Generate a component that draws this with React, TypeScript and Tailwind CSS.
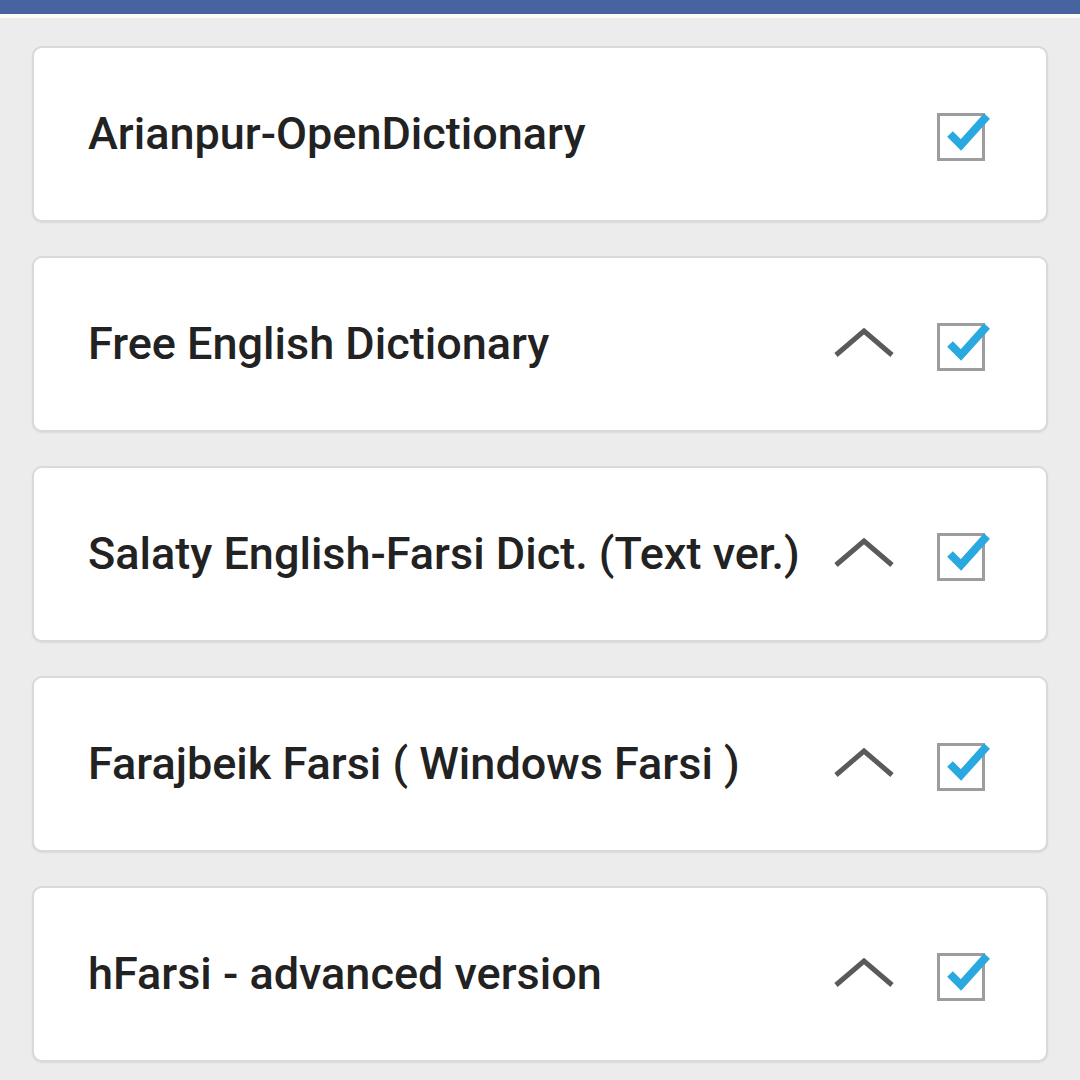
import React from 'react';

interface Dict {
  name: string;
  expandable: boolean;
}

const dicts: Dict[] = [
  { name: 'Arianpur-OpenDictionary', expandable: false },
  { name: 'Free English Dictionary', expandable: true },
  { name: 'Salaty English-Farsi Dict. (Text ver.)', expandable: true },
  { name: 'Farajbeik Farsi ( Windows Farsi )', expandable: true },
  { name: 'hFarsi - advanced version', expandable: true },
];

const Chevron = () => (
  <svg width="60" height="32" viewBox="0 0 60 32" className="shrink-0">
    <path d="M2 27 L30 3 L58 27" fill="none" stroke="#5a5a5a" strokeWidth="5" strokeLinejoin="miter" />
  </svg>
);

const CheckBox = () => (
  <svg width="60" height="60" viewBox="0 0 60 60" className="shrink-0">
    <rect x="6.5" y="10.5" width="45" height="45" fill="none" stroke="#9d9d9d" strokeWidth="3" />
    <path d="M18 30 L29 41 L55 12" fill="none" stroke="#2aa8e0" strokeWidth="8" strokeLinecap="butt" />
  </svg>
);

export default function App() {
  return (
    <div className="w-[1080px] h-[1080px] overflow-hidden bg-[#ececec] font-['Roboto',sans-serif]">
      <div className="h-[14px] bg-[#4764a0]" />
      <div className="h-[4px] bg-[#fbfbf4]" />
      <div className="flex flex-col gap-[34px] px-[32px] pt-[28px]">
        {dicts.map((d) => (
          <div
            key={d.name}
            className="h-[176px] flex items-center bg-white border-2 border-[#d9d9d9] rounded-[10px] pl-[54px] pr-[54px] shadow-[0_1px_2px_rgba(0,0,0,0.08)]"
          >
            <span className="flex-1 text-[45px] font-medium text-[#222] whitespace-nowrap">
              {d.name}
            </span>
            {d.expandable && (
              <div className="mr-[38px]">
                <Chevron />
              </div>
            )}
            <CheckBox />
          </div>
        ))}
      </div>
    </div>
  );
}
